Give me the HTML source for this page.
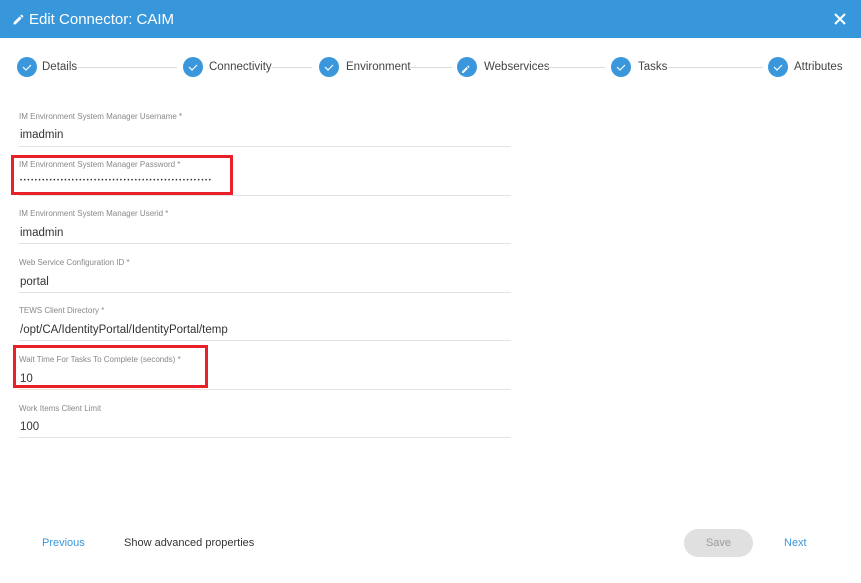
<!DOCTYPE html>
<html><head><style>
*{margin:0;padding:0;box-sizing:border-box}
body{width:861px;height:583px;background:#fff;font-family:"Liberation Sans",sans-serif;position:relative;overflow:hidden;color:#333}
.hdr{position:absolute;left:0;top:0;width:861px;height:38px;background:#3897db;color:#fff}
.hdr .t{position:absolute;left:29px;top:11px;font-size:15px}
.a{position:absolute}
.c{position:absolute;width:20px;height:20px;border-radius:50%;background:#3a97dc;top:57px}
.sl{position:absolute;font-size:11.5px;color:#444;top:61px}
.ln{position:absolute;height:1px;background:#dcdcdc;top:67px}
.lb{position:absolute;left:19px;font-size:8px;color:#888}
.v{position:absolute;left:20px;font-size:11.5px;color:#333}
.ul{position:absolute;left:19px;width:492px;height:1px;background:#e3e3e3}
.red{position:absolute;border:3px solid #e8202a}
.ft{position:absolute;top:537px;font-size:11px}
</style></head><body>
<div class="hdr">
<svg class="a" style="left:12px;top:13px" width="13" height="13" viewBox="0 0 24 24"><path fill="#fff" d="M3 17.25V21h3.75L17.8 9.94l-3.75-3.75L3 17.25zM20.7 7.04a1 1 0 0 0 0-1.41l-2.34-2.34a1 1 0 0 0-1.41 0l-1.83 1.83 3.75 3.75 1.83-1.83z"/></svg>
<div class="t">Edit Connector: CAIM</div>
<svg class="a" style="left:834px;top:13px" width="12" height="12" viewBox="0 0 12 12"><path d="M1 1L11 11M11 1L1 11" stroke="#fff" stroke-width="2"/></svg>
</div>

<div class="c" style="left:17px"></div><div class="c" style="left:183px"></div><div class="c" style="left:319px"></div><div class="c" style="left:457px"></div><div class="c" style="left:611px"></div><div class="c" style="left:768px"></div>
<svg class="a" style="left:0;top:57px" width="861" height="20">
<g fill="none" stroke="#fff" stroke-width="1.2">
<path d="M23 10l3 3 5-5"/><path d="M189 10l3 3 5-5"/><path d="M325 10l3 3 5-5"/><path d="M617 10l3 3 5-5"/><path d="M774 10l3 3 5-5"/>
</g>
<path fill="#fff" d="M462 14.5v1.5h1.5l4.5-4.5-1.5-1.5zM469.3 10.2a.5.5 0 0 0 0-.7l-.8-.8a.5.5 0 0 0-.7 0l-.7.7 1.5 1.5z"/>
</svg>
<div class="sl" style="left:42px">Details</div><div class="ln" style="left:78px;width:99px"></div>
<div class="sl" style="left:209px">Connectivity</div><div class="ln" style="left:272px;width:40px"></div>
<div class="sl" style="left:346px">Environment</div><div class="ln" style="left:410px;width:42px"></div>
<div class="sl" style="left:484px">Webservices</div><div class="ln" style="left:547px;width:58px"></div>
<div class="sl" style="left:638px">Tasks</div><div class="ln" style="left:668px;width:95px"></div>
<div class="sl" style="left:794px">Attributes</div>

<div class="lb" style="top:112px">IM Environment System Manager Username *</div>
<div class="v" style="top:129px">imadmin</div><div class="ul" style="top:146px"></div>
<div class="lb" style="top:160px">IM Environment System Manager Password *</div>
<div class="v" style="top:178px;font-size:6px;letter-spacing:1.6px;white-space:nowrap">••••••••••••••••••••••••••••••••••••••••••••••••••••</div><div class="ul" style="top:195px"></div>
<div class="lb" style="top:209px">IM Environment System Manager Userid *</div>
<div class="v" style="top:227px">imadmin</div><div class="ul" style="top:243px"></div>
<div class="lb" style="top:258px">Web Service Configuration ID *</div>
<div class="v" style="top:276px">portal</div><div class="ul" style="top:292px"></div>
<div class="lb" style="top:306px">TEWS Client Directory *</div>
<div class="v" style="top:324px">/opt/CA/IdentityPortal/IdentityPortal/temp</div><div class="ul" style="top:340px"></div>
<div class="lb" style="top:355px">Wait Time For Tasks To Complete (seconds) *</div>
<div class="v" style="top:373px">10</div><div class="ul" style="top:389px"></div>
<div class="lb" style="top:404px">Work Items Client Limit</div>
<div class="v" style="top:421px">100</div><div class="ul" style="top:437px"></div>

<div class="red" style="left:11px;top:155px;width:222px;height:40px"></div>
<div class="red" style="left:13px;top:345px;width:195px;height:43px"></div>

<div class="ft" style="left:42px;color:#3a97dc">Previous</div>
<div class="ft" style="left:124px;color:#333">Show advanced properties</div>
<div class="a" style="left:684px;top:529px;width:69px;height:28px;border-radius:14px;background:#e0e0e0;color:#9a9a9a;font-size:11px;text-align:center;line-height:28px">Save</div>
<div class="ft" style="left:784px;color:#3a97dc">Next</div>
</body></html>
